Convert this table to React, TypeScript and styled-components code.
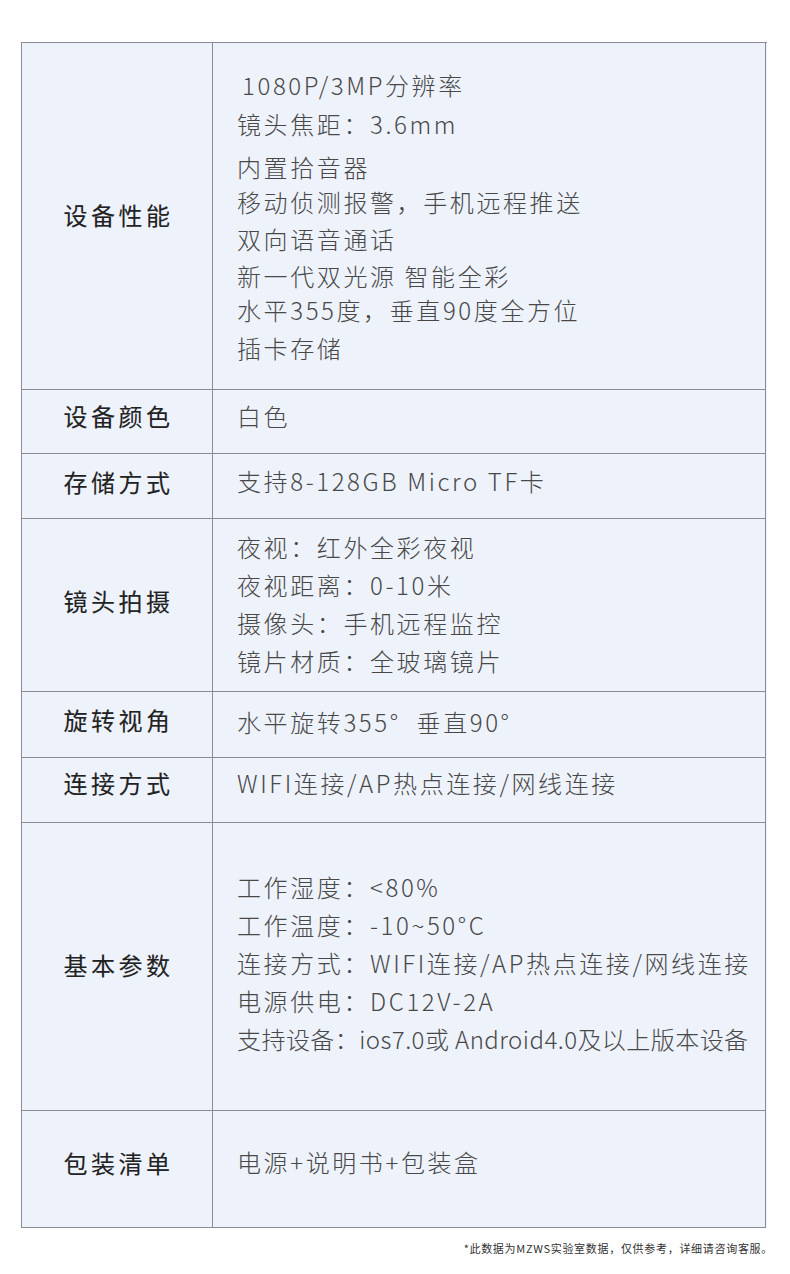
import React from 'react';
import styled, { createGlobalStyle } from 'styled-components';

const GlobalStyle = createGlobalStyle`
  html, body {
    margin: 0;
    padding: 0;
    background: #ffffff;
  }
  body {
    font-family: "Noto Sans CJK SC", "Noto Sans", sans-serif;
  }
`;

const Page = styled.div`
  width: 790px;
  padding: 42px 0 0 21px;
  box-sizing: border-box;
`;

const Table = styled.div`
  width: 745px;
  border-top: 1px solid #8b8b93;
  border-left: 1px solid #8b8b93;
  background: #eef2fb;
`;

const Row = styled.div<{ $h: number }>`
  display: grid;
  grid-template-columns: 191px 553px;
  height: ${(p) => p.$h}px;
`;

const Cell = styled.div<{ $lift?: number }>`
  box-sizing: border-box;
  border-right: 1px solid #8b8b93;
  border-bottom: 1px solid #8b8b93;
  display: flex;
  flex-direction: column;
  justify-content: center;
  padding-bottom: ${(p) => p.$lift ?? 0}px;
`;

const Label = styled(Cell)`
  align-items: center;
  padding-left: 3px;
  font-size: 24px;
  font-weight: 400;
  letter-spacing: 3.5px;
  color: #222222;
  -webkit-text-stroke: 0.1px #222222;
`;

const Value = styled(Cell)`
  padding-left: 24px;
  font-size: 24px;
  font-weight: 300;
  letter-spacing: 2.6px;
  color: #484848;
`;

const Line = styled.div<{ $mt?: number; $indent?: number; $ls?: number }>`
  line-height: 36px;
  height: 36px;
  white-space: nowrap;
  margin-top: ${(p) => p.$mt ?? 0}px;
  padding-left: ${(p) => p.$indent ?? 0}px;
  letter-spacing: ${(p) => (p.$ls !== undefined ? `${p.$ls}px` : 'inherit')};
`;

const Note = styled.div`
  padding: 12px 17px 0 0;
  text-align: right;
  font-size: 11px;
  color: #333333;
  letter-spacing: 0.7px;
`;

type LineSpec = { text: string; mt?: number; indent?: number; ls?: number };

const rows: { label: string; h: number; labelLift: number; valueLift: number; lines: LineSpec[] }[] = [
  {
    label: '设备性能',
    h: 347,
    labelLift: 4,
    valueLift: 0,
    lines: [
      { text: '1080P/3MP分辨率', indent: 5 },
      { text: '镜头焦距：3.6mm', mt: 3 },
      { text: '内置拾音器', mt: 7 },
      { text: '移动侦测报警，手机远程推送', mt: -1 },
      { text: '双向语音通话', mt: 1 },
      { text: '新一代双光源 智能全彩', mt: 1 },
      { text: '水平355度，垂直90度全方位', mt: -2 },
      { text: '插卡存储', mt: 2 },
    ],
  },
  { label: '设备颜色', h: 64, labelLift: 12, valueLift: 12, lines: [{ text: '白色' }] },
  { label: '存储方式', h: 65, labelLift: 10, valueLift: 10, lines: [{ text: '支持8-128GB Micro TF卡' }] },
  {
    label: '镜头拍摄',
    h: 173,
    labelLift: 10,
    valueLift: 2,
    lines: [
      { text: '夜视：红外全彩夜视' },
      { text: '夜视距离：0-10米', mt: 2 },
      { text: '摄像头：手机远程监控', mt: 2 },
      { text: '镜片材质：全玻璃镜片', mt: 2 },
    ],
  },
  { label: '旋转视角', h: 66, labelLift: 10, valueLift: 6, lines: [{ text: '水平旋转355°\u00a0 垂直90°' }] },
  { label: '连接方式', h: 65, labelLift: 16, valueLift: 14, lines: [{ text: 'WIFI连接/AP热点连接/网线连接' }] },
  {
    label: '基本参数',
    h: 288,
    labelLift: 4,
    valueLift: 8,
    lines: [
      { text: '工作湿度：<80%' },
      { text: '工作温度：-10~50°C', mt: 2 },
      { text: '连接方式：WIFI连接/AP热点连接/网线连接', mt: 2 },
      { text: '电源供电：DC12V-2A', mt: 2 },
      { text: '支持设备：ios7.0或 Android4.0及以上版本设备', mt: 2, ls: 0.45 },
    ],
  },
  { label: '包装清单', h: 117, labelLift: 14, valueLift: 14, lines: [{ text: '电源+说明书+包装盒' }] },
];

const App = (): JSX.Element => (
  <Page>
    <GlobalStyle />
    <Table>
      {rows.map((row) => (
        <Row key={row.label} $h={row.h}>
          <Label $lift={row.labelLift}>{row.label}</Label>
          <Value $lift={row.valueLift}>
            {row.lines.map((line) => (
              <Line key={line.text} $mt={line.mt} $indent={line.indent} $ls={line.ls}>
                {line.text}
              </Line>
            ))}
          </Value>
        </Row>
      ))}
    </Table>
    <Note>*此数据为MZWS实验室数据，仅供参考，详细请咨询客服。</Note>
  </Page>
);

export default App;
